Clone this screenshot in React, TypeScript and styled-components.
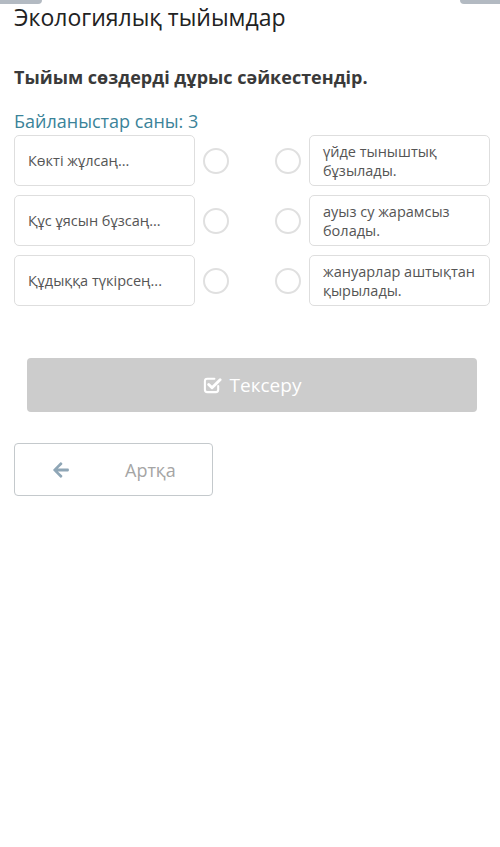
import React from "react";
import styled, { createGlobalStyle } from "styled-components";
import { FaArrowLeft } from "react-icons/fa";

const Global = createGlobalStyle`
  html, body { margin: 0; padding: 0; background: #fff; }
  body { font-family: "Open Sans", "Noto Sans", sans-serif; }
  * { box-sizing: border-box; }
`;

const Page = styled.div`
  width: 500px;
  min-height: 847px;
  background: #fff;
`;

const TopBar = styled.div`
  display: flex;
  justify-content: space-between;
  height: 4px;
`;

const Pill = styled.div<{ $w: number; $side: "l" | "r" }>`
  width: ${(p) => p.$w}px;
  height: 4px;
  background: #b3bac2;
  border-radius: ${(p) => (p.$side === "l" ? "0 0 6px 0" : "0 0 0 6px")};
`;

const Content = styled.div`
  padding: 0 10px 0 14px;
  display: flex;
  flex-direction: column;
`;

const Title = styled.h1`
  margin: 0;
  font-size: 23px;
  font-weight: 400;
  line-height: 26px;
  color: #222;
`;

const Question = styled.h2`
  margin: 36px 0 0;
  font-size: 18px;
  font-weight: 700;
  line-height: 22px;
  color: #3a3a3a;
`;

const Count = styled.div`
  margin-top: 22px;
  font-size: 18px;
  line-height: 22px;
  color: #3b8399;
`;

const Grid = styled.div`
  margin-top: 3px;
  display: grid;
  grid-template-columns: 181px 8px 26px 46px 26px 8px 181px;
  grid-auto-rows: 51px;
  row-gap: 9px;
  align-items: center;
`;

const Card = styled.div<{ $col: number }>`
  grid-column: ${(p) => p.$col};
  height: 51px;
  border: 1px solid #dedede;
  border-radius: 5px;
  display: flex;
  align-items: center;
  padding: 0 12px 0 13px;
  font-size: 14.5px;
  line-height: 19px;
  color: #555;
`;

const Dot = styled.div<{ $col: number }>`
  grid-column: ${(p) => p.$col};
  width: 26px;
  height: 26px;
  border-radius: 50%;
  border: 2px solid #e0e0e0;
  background: #fff;
`;

const CheckButton = styled.button`
  margin: 52px 13px 0 13px;
  height: 54px;
  border: none;
  border-radius: 4px;
  background: #cccccc;
  color: #fff;
  font-family: inherit;
  font-size: 19px;
  display: flex;
  align-items: center;
  justify-content: center;
  gap: 8px;
`;

const CheckIcon = styled.svg`
  width: 19px;
  height: 19px;
  margin-top: -2px;
`;

const BackButton = styled.button`
  margin-top: 31px;
  width: 199px;
  height: 53px;
  border: 1.5px solid #c4c9cc;
  border-radius: 4px;
  background: #fff;
  display: flex;
  align-items: center;
  padding: 0 0 0 37px;
  font-family: inherit;
  font-size: 18px;
  color: #a5a5a5;
  svg { width: 18px; height: 18px; color: #8fa6b6; }
`;

const BackLabel = styled.span`
  margin-left: 55px;
`;

const left = ["Көкті жұлсаң...", "Құс ұясын бұзсаң...", "Құдыққа түкірсең..."];
const right = ["үйде тыныштық бұзылады.", "ауыз су жарамсыз болады.", "жануарлар аштықтан қырылады."];

export default function App() {
  return (
    <Page>
      <Global />
      <TopBar>
        <Pill $w={42} $side="l" />
        <Pill $w={40} $side="r" />
      </TopBar>
      <Content>
        <Title>Экологиялық тыйымдар</Title>
        <Question>Тыйым сөздерді дұрыс сәйкестендір.</Question>
        <Count>Байланыстар саны: 3</Count>
        <Grid>
          {left.map((l, i) => (
            <React.Fragment key={i}>
              <Card $col={1}>{l}</Card>
              <Dot $col={3} />
              <Dot $col={5} />
              <Card $col={7}>{right[i]}</Card>
            </React.Fragment>
          ))}
        </Grid>
        <CheckButton>
          <CheckIcon viewBox="0 0 20 20" fill="none" stroke="currentColor" strokeLinecap="round" strokeLinejoin="round">
            <path d="M16 11.5V15.5a2.5 2.5 0 0 1-2.5 2.5H4.5A2.5 2.5 0 0 1 2 15.5V6.5A2.5 2.5 0 0 1 4.5 4H12" strokeWidth="2.2" />
            <path d="M6 10l3.5 3.5L18 5" strokeWidth="3" />
          </CheckIcon>
          Тексеру
        </CheckButton>
        <BackButton>
          <FaArrowLeft />
          <BackLabel>Артқа</BackLabel>
        </BackButton>
      </Content>
    </Page>
  );
}
